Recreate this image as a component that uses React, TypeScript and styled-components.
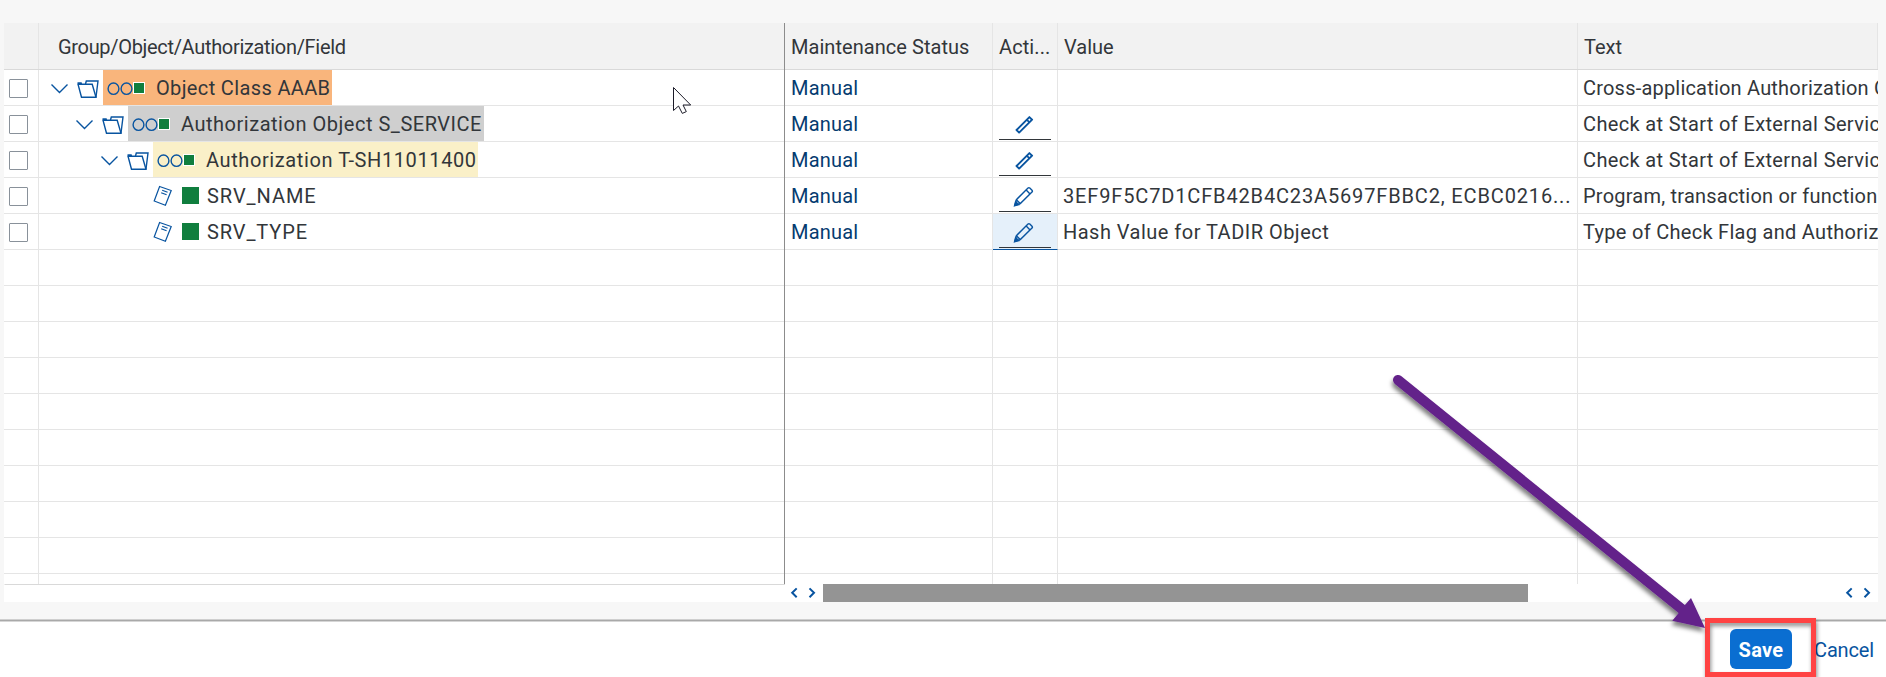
import React from "react";
import styled, { createGlobalStyle, css } from "styled-components";

const GlobalStyle = createGlobalStyle`
  * { box-sizing: border-box; }
  body { margin: 0; background: #f7f7f7; }
`;

const colors = {
  page: "#f7f7f7",
  header: "#f2f2f2",
  line: "#e5e5e5",
  headerLine: "#d9d9d9",
  text: "#32363a",
  status: "#053b70",
  icon: "#0854a0",
  green: "#107e3e",
};

const Page = styled.div`
  position: relative;
  width: 1886px;
  height: 677px;
  overflow: hidden;
  display: flex;
  flex-direction: column;
  background: ${colors.page};
  color: ${colors.text};
  font-family: Roboto, "Liberation Sans", sans-serif;
  font-size: 20px;
`;

const TableArea = styled.main`
  height: 619px;
  padding: 23px 8px 17px 4px;
`;

const Table = styled.div`
  display: flex;
  flex-wrap: wrap;
  height: 579px;
  background: #fff;
`;

const Pane = styled.section<{ $fixed?: boolean }>`
  width: ${(p) => (p.$fixed ? "781px" : "1093px")};
  height: 561px;
  overflow: hidden;
  ${(p) => p.$fixed && css`border-right: 1px solid #8c8c8c;`}
`;

const HeaderRow = styled.div<{ $columns: string }>`
  display: grid;
  grid-template-columns: ${(p) => p.$columns};
  height: 47px;
  background: ${colors.header};
  border-bottom: 1px solid ${colors.headerLine};
`;

const Row = styled(HeaderRow)`
  height: 36px;
  background: #fff;
  border-bottom-color: ${colors.line};
`;

const Cell = styled.div<{ $header?: boolean; $last?: boolean; $pad?: number }>`
  display: flex;
  align-items: center;
  min-width: 0;
  overflow: hidden;
  white-space: nowrap;
  padding-left: ${(p) => p.$pad ?? 6}px;
  padding-top: ${(p) => (p.$header ? 2 : 0)}px;
  ${(p) => !p.$last && css`border-right: 1px solid ${colors.line};`}
`;

const Label = styled.span<{ $track?: number; $status?: boolean }>`
  flex: none;
  letter-spacing: ${(p) => p.$track ?? 0}px;
  ${(p) => p.$status && css`color: ${colors.status};`}
`;

const Checkbox = styled.span`
  width: 19px;
  height: 19px;
  margin: 1px 0 0 5px;
  border: 1px solid #89919a;
  border-radius: 1px;
  background: #fff;
`;

const TreeCell = styled(Cell)<{ $level: number }>`
  padding-left: ${(p) => 11 + p.$level * 25}px;
`;

const Highlight = styled.span<{ $color: string; $width: number }>`
  display: flex;
  align-items: center;
  align-self: stretch;
  flex: none;
  width: ${(p) => p.$width}px;
  margin-left: 4px;
  padding-left: 3px;
  background: ${(p) => p.$color};
`;

const Leaf = styled.span`
  display: flex;
  align-items: center;
  padding-left: 28px;
`;

const GreenSquare = styled.span`
  width: 17px;
  height: 17px;
  margin: 0 8px 0 9px;
  background: ${colors.green};
`;

const ActionCell = styled(Cell)<{ $selected?: boolean }>`
  padding: 0 0 0 6px;
  align-items: flex-start;
  ${(p) => p.$selected && css`
    background: #e5f0fa;
    height: 36px;
    margin-bottom: -1px;
    border-bottom: 1px solid #0854a0;
  `}
`;

const ActionField = styled.span`
  display: flex;
  justify-content: center;
  width: 52px;
  height: 34px;
  padding-right: 3px;
  border-bottom: 1px solid ${colors.text};
`;

const Filler = styled.div`
  width: 781px;
  height: 18px;
  border-top: 1px solid ${colors.headerLine};
  border-left: 1px solid #fff;
`;

const ScrollBar = styled.div`
  display: flex;
  align-items: center;
  justify-content: space-between;
  width: 1093px;
  height: 18px;
  padding: 0 0 0 3px;
`;

const ScrollStart = styled.div`
  display: flex;
  align-items: center;
`;

const ScrollButtons = styled.div`
  display: flex;
  width: 35px;
`;

const ScrollHandle = styled.div`
  width: 705px;
  height: 18px;
  background: #949494;
`;

const Footer = styled.footer`
  display: flex;
  flex: 1;
  justify-content: flex-end;
  padding: 7px 12px 0 0;
  background: #fff;
  border-top: 1px solid #cfcfcf;
  box-shadow: inset 0 1px #a9a9a9, inset 0 2px #d6d6d6;
`;

const Button = styled.button<{ $primary?: boolean }>`
  height: 40px;
  margin: 2px 0 0;
  padding: 0;
  border: 0;
  border-radius: 6px;
  font: inherit;
  line-height: 42px;
  color: ${colors.icon};
  background: transparent;
  letter-spacing: -0.15px;
  ${(p) => p.$primary && css`
    width: 62px;
    margin-right: 22px;
    font-weight: 700;
    letter-spacing: 0.3px;
    color: #fff;
    background: #0a6ed1;
  `}
`;

const HighlightFrame = styled.div`
  position: absolute;
  left: 1705px;
  top: 618px;
  width: 111px;
  height: 59px;
  border: 5px solid #ff4343;
  filter: drop-shadow(1px 3px 2px rgba(0, 0, 0, 0.45));
`;

const Overlay = styled.svg`
  position: absolute;
  left: 0;
  top: 0;
  pointer-events: none;
`;

const Icon = styled.svg`
  display: block;
  flex: none;
  fill: none;
  stroke: ${colors.icon};
  stroke-width: 1.4;
`;

const Chevron = () => (
  <Icon width="19" height="20" viewBox="0 0 19 20">
    <path d="M1.5 6.5 L9.5 14.5 L17.5 6.5" />
  </Icon>
);

const FolderSpaced = styled(Icon)`
  margin: 4px 0 0 8px;
`;

const Folder = () => (
  <FolderSpaced width="22" height="20" viewBox="0 0 22 20">
    <path d="M4.5 17.3 L1 4.3 H15.2 L19 17.3 Z" />
    <path d="M8.5 4 L9.3 1 H21 L19 17" />
    <path d="M.4 2.2 H4.6 L5.2 4.5 H1 Z" fill={colors.icon} stroke="none" />
  </FolderSpaced>
);

const LightsIcon = styled(Icon)`
  margin: 1px 10px 0 0;
`;

const Lights = () => (
  <LightsIcon width="40" height="16" viewBox="0 0 40 16">
    <ellipse cx="7.5" cy="8.7" rx="5.4" ry="5.7" />
    <ellipse cx="20.5" cy="8.7" rx="5.4" ry="5.7" />
    <rect x="27" y="2" width="12" height="12" fill="#fff" stroke="none" />
    <rect x="28" y="3" width="10" height="10" fill={colors.green} stroke="none" />
  </LightsIcon>
);

const Note = () => (
  <Icon width="20" height="22" viewBox="0 0 20 22">
    <path d="M6.6 1.5 L18.2 5.5 L12.4 20.3 L1.2 16 Z" strokeWidth="1.2" />
    <path d="M9.2 5.3 L14.6 7.3 M8.2 7.8 L13.6 9.8" strokeWidth="1.2" />
  </Icon>
);

const PencilIcon = styled(Icon)`
  margin-top: 8px;
`;

const Pencil = ({ full }: { full?: boolean }) => (
  <PencilIcon width="22" height="22" viewBox="0 0 22 22">
    {full ? (
      <>
        <path d="M2 19.2 L3.4 13.7 L15 2.1 Q15.9 1.3 16.8 2.1 L19 4.3 Q19.8 5.2 19 6.1 L7.3 17.6 Z" />
        <path d="M13.2 4.1 L17 7.9 M3.6 13.9 L7.2 17.5" />
        <path d="M1.5 19.8 L2.6 15.5 L5.8 18.6 Z" fill={colors.icon} />
      </>
    ) : (
      <>
        <path d="M3.5 16 L16.4 3.1 L19.1 5.7 L6.1 18.6 Z" strokeWidth="1.9" strokeLinejoin="round" />
        <path d="M13.8 5.7 L16.4 8.3" strokeWidth="1.8" />
      </>
    )}
  </PencilIcon>
);

const ArrowIcon = styled(Icon)`
  width: 18px;
  height: 18px;
  stroke-width: 2;
`;

const Arrows = () => (
  <ScrollButtons>
    <ArrowIcon viewBox="0 0 18 18"><path d="M8.7 4.4 L4.2 8.8 L8.7 13.2" /></ArrowIcon>
    <ArrowIcon viewBox="0 0 18 18"><path d="M3.5 4.4 L8 8.8 L3.5 13.2" /></ArrowIcon>
  </ScrollButtons>
);

interface Entry {
  label: string;
  track: number;
  level: number;
  color?: string;
  width?: number;
  action?: "partial" | "full";
  selected?: boolean;
  value?: string;
  valueTrack?: number;
  text: string;
  textTrack: number;
}

const entries: Entry[] = [
  { label: "Object Class AAAB", track: 0.36, level: 0, color: "#f9b57c", width: 229, text: "Cross-application Authorization Objects", textTrack: 0.2 },
  { label: "Authorization Object S_SERVICE", track: 0.52, level: 1, color: "#cfcfcf", width: 356, action: "partial", text: "Check at Start of External Services", textTrack: 0.36 },
  { label: "Authorization T-SH11011400", track: 0.6, level: 2, color: "#faf0c8", width: 325, action: "partial", text: "Check at Start of External Services", textTrack: 0.36 },
  { label: "SRV_NAME", track: 0.95, level: 3, action: "full", value: "3EF9F5C7D1CFB42B4C23A5697FBBC2, ECBC0216...", valueTrack: 0.85, text: "Program, transaction or function module", textTrack: 0.22 },
  { label: "SRV_TYPE", track: 0.9, level: 3, action: "full", selected: true, value: "Hash Value for TADIR Object", valueTrack: 0.48, text: "Type of Check Flag and Authorization", textTrack: 0.29 },
];

const emptyRows = Array.from({ length: 10 }, (_, i) => i);
const fixedColumns = "35px 1fr";
const scrollColumns = "208px 65px 520px 1fr";

export default function App() {
  return (
    <Page>
      <GlobalStyle />
      <TableArea>
        <Table>
          <Pane $fixed>
            <HeaderRow $columns={fixedColumns}>
              <Cell $header />
              <Cell $header $last $pad={19}><Label $track={-0.32}>Group/Object/Authorization/Field</Label></Cell>
            </HeaderRow>
            {entries.map((e) => (
              <Row $columns={fixedColumns} key={e.label}>
                <Cell $pad={0}><Checkbox /></Cell>
                <TreeCell $last $level={e.level}>
                  {e.color ? (
                    <>
                      <Chevron />
                      <Folder />
                      <Highlight $color={e.color} $width={e.width ?? 0}>
                        <Lights />
                        <Label $track={e.track}>{e.label}</Label>
                      </Highlight>
                    </>
                  ) : (
                    <Leaf>
                      <Note />
                      <GreenSquare />
                      <Label $track={e.track}>{e.label}</Label>
                    </Leaf>
                  )}
                </TreeCell>
              </Row>
            ))}
            {emptyRows.map((i) => (
              <Row $columns={fixedColumns} key={i}><Cell /><Cell $last /></Row>
            ))}
          </Pane>
          <Pane>
            <HeaderRow $columns={scrollColumns}>
              <Cell $header><Label $track={0.05}>Maintenance Status</Label></Cell>
              <Cell $header><Label $track={0.1}>Acti...</Label></Cell>
              <Cell $header><Label>Value</Label></Cell>
              <Cell $header><Label>Text</Label></Cell>
            </HeaderRow>
            {entries.map((e) => (
              <Row $columns={scrollColumns} key={e.label}>
                <Cell><Label $status $track={0.2}>Manual</Label></Cell>
                <ActionCell $selected={e.selected}>
                  {e.action && <ActionField><Pencil full={e.action === "full"} /></ActionField>}
                </ActionCell>
                <Cell $pad={5}><Label $track={e.valueTrack}>{e.value}</Label></Cell>
                <Cell $last $pad={5}><Label $track={e.textTrack}>{e.text}</Label></Cell>
              </Row>
            ))}
            {emptyRows.map((i) => (
              <Row $columns={scrollColumns} key={i}><Cell /><Cell /><Cell /><Cell $last /></Row>
            ))}
          </Pane>
          <Filler />
          <ScrollBar>
            <ScrollStart>
              <Arrows />
              <ScrollHandle />
            </ScrollStart>
            <Arrows />
          </ScrollBar>
        </Table>
      </TableArea>
      <Footer>
        <Button $primary>Save</Button>
        <Button>Cancel</Button>
      </Footer>
      <HighlightFrame />
      <Overlay width="1886" height="677" viewBox="0 0 1886 677">
        <defs>
          <filter id="arrowShadow" x="-5%" y="-5%" width="110%" height="115%">
            <feDropShadow dx="-1" dy="4" stdDeviation="2" floodColor="#000" floodOpacity="0.5" />
          </filter>
        </defs>
        <g filter="url(#arrowShadow)" fill="#63218a">
          <path d="M1398 380 L1683 610" stroke="#63218a" strokeWidth="10" strokeLinecap="round" />
          <path d="M1705 628 L1672.3 620.7 L1679.5 612 L1684.5 605.5 L1691 598 Z" />
        </g>
        <path d="M673.5 87.5 V110.5 L678.5 106 L682.3 113.4 L686.3 111.6 L683 105 H690.7 Z" fill="#fff" stroke="#1b1b28" strokeWidth="1" />
      </Overlay>
    </Page>
  );
}
